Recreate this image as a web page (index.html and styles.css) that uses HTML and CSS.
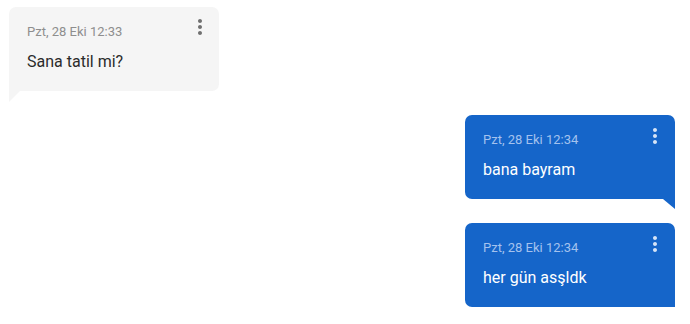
FILE: index.html
```html
<!DOCTYPE html>
<html lang="tr">
<head>
<meta charset="utf-8">
<title>Sohbet</title>
<link rel="stylesheet" href="styles.css">
</head>
<body>
<div class="chat">
  <div class="msg msg-in">
    <div class="time">Pzt, 28 Eki 12:33</div>
    <div class="text">Sana tatil mi?</div>
    <svg class="more" viewBox="0 0 24 24" width="24" height="24"><path d="M12 8c1.1 0 2-.9 2-2s-.9-2-2-2-2 .9-2 2 .9 2 2 2zm0 2c-1.1 0-2 .9-2 2s.9 2 2 2 2-.9 2-2-.9-2-2-2zm0 6c-1.1 0-2 .9-2 2s.9 2 2 2 2-.9 2-2-.9-2-2-2z"/></svg>
  </div>
  <div class="msg msg-out">
    <div class="time">Pzt, 28 Eki 12:34</div>
    <div class="text">bana bayram</div>
    <svg class="more" viewBox="0 0 24 24" width="24" height="24"><path d="M12 8c1.1 0 2-.9 2-2s-.9-2-2-2-2 .9-2 2 .9 2 2 2zm0 2c-1.1 0-2 .9-2 2s.9 2 2 2 2-.9 2-2-.9-2-2-2zm0 6c-1.1 0-2 .9-2 2s.9 2 2 2 2-.9 2-2-.9-2-2-2z"/></svg>
  </div>
  <div class="msg msg-out">
    <div class="time">Pzt, 28 Eki 12:34</div>
    <div class="text">her gün asşldk</div>
    <svg class="more" viewBox="0 0 24 24" width="24" height="24"><path d="M12 8c1.1 0 2-.9 2-2s-.9-2-2-2-2 .9-2 2 .9 2 2 2zm0 2c-1.1 0-2 .9-2 2s.9 2 2 2 2-.9 2-2-.9-2-2-2zm0 6c-1.1 0-2 .9-2 2s.9 2 2 2 2-.9 2-2-.9-2-2-2z"/></svg>
  </div>
</div>
</body>
</html>
```

FILE: styles.css
```css
html, body {
  margin: 0;
  padding: 0;
  background: #ffffff;
}
body {
  font-family: Roboto, "Noto Sans", "Liberation Sans", sans-serif;
}
.chat {
  display: flex;
  flex-direction: column;
  gap: 24px;
  padding: 7px 15px 0 9px;
}
.msg {
  position: relative;
  width: 210px;
  box-sizing: border-box;
  padding: 17px 40px 17px 18px;
  border-radius: 7px;
  display: flex;
  flex-direction: column;
  gap: 10px;
}
.time {
  font-size: 13px;
  line-height: 16px;
}
.text {
  font-size: 16px;
  line-height: 24px;
}
.more {
  position: absolute;
  top: 9px;
  right: 7px;
}
.msg-in {
  align-self: flex-start;
  background: #f5f5f5;
  border-bottom-left-radius: 0;
}
.msg-in .time { color: #8e8e8e; }
.msg-in .text { color: #2b2b2b; }
.msg-in .more { fill: #707070; top: 8px; }
.msg-in::after {
  content: "";
  position: absolute;
  left: 0;
  top: 100%;
  border-top: 11px solid #f5f5f5;
  border-right: 11px solid transparent;
}
.msg-out {
  align-self: flex-end;
  background: #1565c9;
  border-bottom-right-radius: 0;
}
.msg-out .time { color: #a4c2ee; }
.msg-out .text { color: #ffffff; }
.msg-out .more { fill: #d6e4f7; right: 8px; }
.msg-out::after {
  content: "";
  position: absolute;
  right: 0;
  top: 100%;
  border-top: 10px solid #1565c9;
  border-left: 12px solid transparent;
}
```
